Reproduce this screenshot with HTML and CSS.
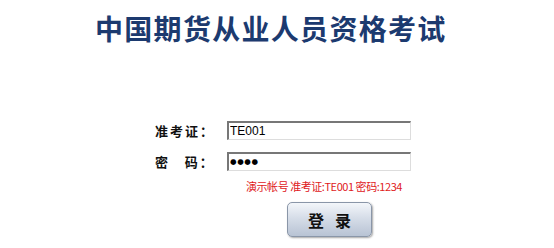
FILE: index.html
```html
<!DOCTYPE html>
<html>
<head>
<meta charset="utf-8">
<link rel="stylesheet" href="styles.css">
</head>
<body>
<div class="page">
  <h1 class="title">中国期货从业人员资格考试</h1>
  <form class="form">
    <div class="row">
      <label class="label">准考证：</label>
      <input class="field" type="text" value="TE001">
    </div>
    <div class="row row2">
      <label class="label">密&nbsp;&nbsp;&nbsp;码：</label>
      <input class="field pass" type="text" value="●●●●">
    </div>
    <div class="hint">演示帐号 准考证:TE001 密码:1234</div>
    <div class="actions">
      <button class="btn" type="button">登&nbsp;&nbsp;&nbsp;录</button>
    </div>
  </form>
</div>
</body>
</html>
```
FILE: styles.css
```css
html, body { margin: 0; padding: 0; background: #fff; }
body { width: 554px; height: 248px; overflow: hidden; font-family: "Noto Sans CJK SC", "Liberation Sans", sans-serif; }
.page { display: flex; flex-direction: column; }
.title {
  margin: 10px 0 0 95px;
  font-size: 28px;
  line-height: 36px;
  font-weight: bold;
  color: #1c3a6f;
  letter-spacing: 1.3px;
}
.form { display: flex; flex-direction: column; margin-top: 74px; }
.row { display: flex; align-items: center; height: 20px; }
.row2 { margin-top: 11px; }
.label {
  width: 72px;
  margin-left: 155px;
  font-size: 13px;
  font-weight: bold;
  color: #111;
  letter-spacing: 2px;
}
.field {
  box-sizing: border-box;
  width: 184px;
  height: 19px;
  margin: 0;
  padding: 0 1px;
  border-style: solid;
  border-width: 2px 1px 1px 2px;
  border-color: #777 #ddd #ddd #777;
  font-family: "Liberation Sans", sans-serif;
  font-size: 12px;
  color: #000;
  outline: none;
}
.pass { font-family: "DejaVu Sans", sans-serif; font-size: 7.5px; letter-spacing: 0.6px; padding-left: 1px; }
.hint {
  margin: 8px 0 0 246px;
  font-size: 11px;
  line-height: 14px;
  color: #e0201c;
  letter-spacing: -0.45px;
  font-family: "Noto Sans CJK SC", sans-serif;
}
.actions { margin: 9px 0 0 287px; }
.btn {
  width: 85px;
  height: 35px;
  border: 1px solid #8a96a8;
  border-radius: 5px;
  background: linear-gradient(#f3f6fa 0%, #d6dde8 45%, #b8c3d4 100%);
  box-shadow: 1px 1px 2px rgba(0,0,0,0.35);
  font-family: "Noto Sans CJK SC", sans-serif;
  font-size: 16px;
  font-weight: bold;
  color: #111;
  padding: 0;
}
```
